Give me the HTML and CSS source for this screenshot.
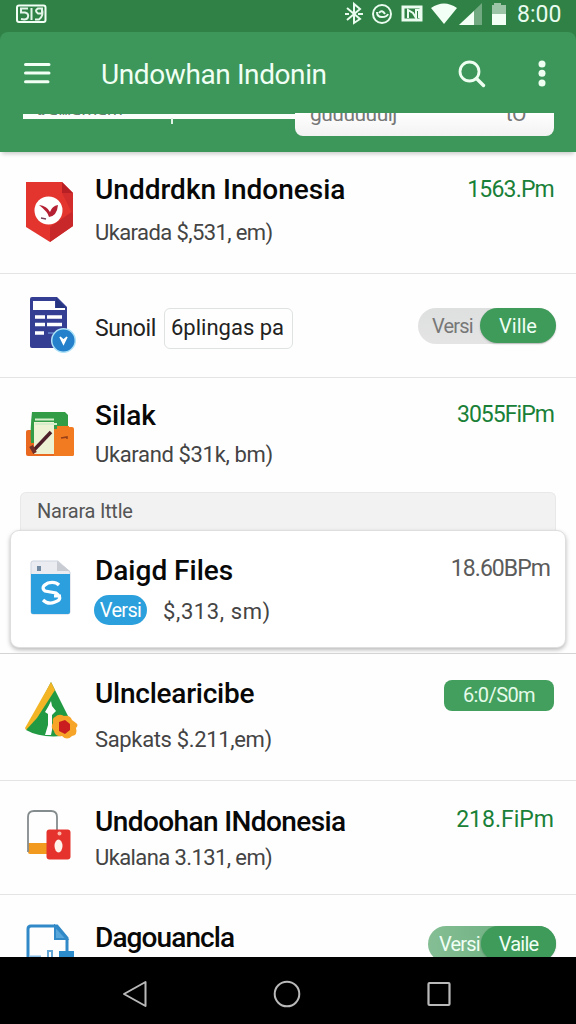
FILE: index.html
```
<!DOCTYPE html>
<html lang="id">
<head>
<meta charset="utf-8">
<title>Undowhan Indonin</title>
<link rel="stylesheet" href="styles.css">
</head>
<body>
<div class="screen">
  <div class="statusbar">
    <svg class="notif" width="32" height="20" viewBox="0 0 32 20"><rect x="2" y="1.500" width="28.500" height="16.500" rx="2" fill="#2f8145" stroke="#f2fff5" stroke-width="2"/><path d="M13 4.500H6v4h4q4 1 3 4.500t-7 2M16.500 4v12M28 4.500h-5q-4 2 0 5h4v-4q2 6-3 10h-4" fill="none" stroke="#e3f5e8" stroke-width="2"/></svg>
    <svg class="sysicons" width="172" height="28" viewBox="0 0 172 28">
      <g fill="none" stroke="#e9fcef" stroke-width="2">
        <path d="M3 8l13 11-6 4V4l6 5L3 20M1 14h4M14 14h5"/>
        <circle cx="38" cy="14" r="9"/><path d="M33 12q0 5 5 5t6-3M35 13q3-4 6 1"/>
        <path d="M59 7h18v13H59z" stroke-width="3"/><path d="M64 18v-8l5 3 3 5v-8h3v8"/>
      </g>
      <path d="M87 8q13-9 26 0l-13 16z" fill="#f2fff5"/>
      <path d="M115 25L138 3v22z" fill="#71a981"/><path d="M115 25l15-14v14z" fill="#f2fff5"/>
      <path d="M150 3h7v2h5v9h-14V5h2z" fill="#9bc5a6"/><path d="M148 14h14v11h-14z" fill="#f2fff5"/>
    </svg>
    <span class="clock">8:00</span>
  </div>
  <header class="appbar">
    <svg class="menu" width="28" height="23" viewBox="0 0 28 23"><path d="M2.500 2.500h23.500M2.500 11h23.500M2.500 19.700h22.500" stroke="#f2fff5" stroke-width="3" stroke-linecap="round"/></svg>
    <h1 class="apptitle">Undowhan Indonin</h1>
    <svg class="search" width="30" height="30" viewBox="0 0 30 30"><circle cx="11.500" cy="11.500" r="9.500" fill="none" stroke="#eefff2" stroke-width="2.800"/><path d="M18.500 18.500l7 7" stroke="#eefff2" stroke-width="3.400" stroke-linecap="round"/></svg>
    <svg class="more" width="8" height="28" viewBox="0 0 8 28" fill="#eefff2"><circle cx="4" cy="4" r="3.500"/><circle cx="4" cy="13.300" r="3.500"/><circle cx="4" cy="23" r="3.500"/></svg>
  </header>
  <div class="strip">
    <div class="line"><span class="ghost">Kawamam</span><i class="tick"></i></div>
    <div class="field"><span>guuuuuuij</span><span>tO</span></div>
  </div>
  <main class="list">
    <section class="row r1">
      <svg class="icon" width="52" height="64" viewBox="0 0 52 64"><path d="M1 1h36l11 11v33L25 61 1 46z" fill="#e3342e"/><path d="M48 30v15L25 61V46z" fill="#c9282a"/><path d="M37 1v11h11z" fill="#b71f25"/><path d="M37 12h11v22z" fill="#d32c2c"/><circle cx="23.500" cy="29.500" r="14" fill="#fff"/><path d="M14 24q8 1 11 7 2-6 8-7-1 11-9 12-1-5-10-12z" fill="#b52032"/><path d="M16 37l5 1" stroke="#744157" stroke-width="1.500"/></svg>
      <div class="body"><h2 class="title">Unddrdkn Indonesia</h2><p class="sub tight">Ukarada $,531, em)</p></div>
      <span class="price p1">1563.Pm</span>
    </section>
    <section class="row r2">
      <svg class="icon" width="52" height="60" viewBox="0 0 52 60"><path d="M6 1h25l10 10v41H6q-2 0-2-2V3q0-2 2-2z" fill="#343f94"/><path d="M7 5h22v7h10v2H7z" fill="#fff"/><path d="M30 2v10h10z" fill="#27347f"/><path d="M9 21h10M21 21h15M9 28.500h10M21 28.500h15M9 37h9" stroke="#fff" stroke-width="3.500"/><path d="M22 37h6" stroke="#5875be" stroke-width="2"/><circle cx="37.500" cy="44.500" r="11.800" fill="#2480ca" stroke="#aee2f7" stroke-width="1.500"/><path d="M34 41l3.500 7 3.500-7-3.500 3z" fill="#fff" stroke="#fff" stroke-width="1.500"/></svg>
      <div class="body inline"><span class="label">Sunoil</span><span class="input">6plingas pa</span></div>
      <div class="toggle"><span class="off">Versi</span><span class="on">Ville</span></div>
    </section>
    <section class="row r3">
      <svg class="icon" width="52" height="48" viewBox="0 0 52 48"><rect x="1" y="18" width="48" height="26" rx="2" fill="#e96920"/><path d="M7 0h33l3 3v28H6q-1-14 1-31z" fill="#329c47"/><path d="M9 7h20v35H9z" fill="#eef2d5"/><path d="M9 6h28v4H9z" fill="#329c47"/><path d="M10 7.500h19M10 12h22" stroke="#d6edcb" stroke-width="1.800"/><path d="M9 38l17-18" stroke="#4e1f2a" stroke-width="3.500"/><path d="M6 34l4 7" stroke="#71302a" stroke-width="4"/><path d="M29 17h3v-3h12v1h3q2 0 2 2v25q0 2-2 2H29z" fill="#f27a20"/><path d="M36 26l6-1v2" fill="none" stroke="#963f18" stroke-width="1.500"/></svg>
      <div class="body"><h2 class="title">Silak</h2><p class="sub snug">Ukarand $31k, bm)</p></div>
      <span class="price p3">3055FiPm</span>
    </section>
    <div class="section">Narara Ittle</div>
    <section class="row card">
      <svg class="icon" width="42" height="56" viewBox="0 0 42 56"><path d="M3 1h25l12 11v40q0 2-2 2H3q-2 0-2-2V3q0-2 2-2z" fill="#ebecf2" stroke="#cdd3dd"/><path d="M1 14h39v38q0 2-2 2H3q-2 0-2-2z" fill="#2c9fdf"/><path d="M27 1v10h13z" fill="#c9cbd2"/><path d="M7 6h4v5H7z" fill="#728ba2"/><path d="M29 25q-4-4-11-2-8 4-3 8l11 2q8 6-1 9-7 3-12-2M24 36h7" fill="none" stroke="#fff" stroke-width="3.200"/></svg>
      <div class="body"><h2 class="title">Daigd Files</h2><p class="sub"><span class="chip">Versi</span><span class="wide">$,313, sm)</span></p></div>
      <span class="price p3">18.60BPm</span>
    </section>
    <section class="row r5">
      <svg class="icon" width="54" height="62" viewBox="0 0 54 62"><path d="M26 1l19 38-8 16q-22 2-36-6z" fill="#219a43"/><path d="M26 1l4 8L12 37 1 49 0 47z" fill="#f3b526"/><path d="M26 20l1 5 4 5-4 4v15l-1 5h-6l3-10V33l-3-2 3-5z" fill="#fff"/><path d="M30 36q4-4 9-1 6-1 8 4l4 3q3 2 0 5 2 7-4 8-5 5-10 0-7 1-8-5-4-4-1-8-1-5 2-6z" fill="#f6a528"/><path d="M34 41l6-2 5 4v6l-5 4-6-3z" fill="#c91d20"/></svg>
      <div class="body"><h2 class="title t5">Ulnclearicibe</h2><p class="sub snug">Sapkats $.211,em)</p></div>
      <span class="badge">6:0/S0m</span>
    </section>
    <section class="row r6">
      <svg class="icon" width="46" height="52" viewBox="0 0 46 52"><path d="M2 34h19v11H4q-2 0-2-2z" fill="#f29a20"/><path d="M2 43V8q0-6 6-6h17q6 0 6 6v13" fill="none" stroke="#858c8e" stroke-width="1.800"/><rect x="20.500" y="20.500" width="24" height="30" rx="3" fill="#e5322c"/><circle cx="33.500" cy="24.500" r="2" fill="#ffb5a5"/><ellipse cx="32.500" cy="37" rx="4" ry="6.500" fill="#fff3ec"/></svg>
      <div class="body"><h2 class="title t6">Undoohan INdonesia</h2><p class="sub tight">Ukalana 3.131, em)</p></div>
      <span class="price">218.FiPm</span>
    </section>
    <section class="row r7">
      <svg class="icon" width="50" height="38" viewBox="0 0 50 38"><path d="M2 38V5q0-3 3-3h26l10 12v14" fill="none" stroke="#3189c7" stroke-width="3"/><path d="M29 2v13h12z" fill="#59a6da" stroke="#3189c7" stroke-width="2"/><path d="M33 27h15v11H33z" fill="#2c8ccc"/><path d="M4 33h11" stroke="#87bde5" stroke-width="3"/><path d="M22 38V27h4v11" fill="none" stroke="#64a7d7" stroke-width="2"/></svg>
      <div class="body"><h2 class="title t7">Dagouancla</h2></div>
      <div class="toggle green"><span class="off">Versi</span><span class="on">Vaile</span></div>
    </section>
  </main>
  <nav class="navbar">
    <svg width="26" height="28" viewBox="0 0 26 28"><path d="M2 14L23.500 2v24z" fill="none" stroke="#b9b9b9" stroke-width="2" stroke-linejoin="round"/></svg>
    <svg width="28" height="28" viewBox="0 0 28 28"><circle cx="14" cy="14" r="12.300" fill="none" stroke="#b9b9b9" stroke-width="2"/></svg>
    <svg width="26" height="28" viewBox="0 0 26 28"><rect x="2.500" y="3" width="21" height="22" rx="1" fill="none" stroke="#b9b9b9" stroke-width="2.200"/></svg>
  </nav>
</div>
</body>
</html>
```

FILE: styles.css
```
* { box-sizing: border-box; }
body { margin: 0; font-family: Roboto, "Noto Sans", sans-serif; color: #444; }
h1, h2, p { margin: 0; font-weight: 400; white-space: nowrap; }
svg { flex: none; }
.screen { width: 576px; height: 1024px; display: flex; flex-direction: column; overflow: hidden; background: #fefefe; }
.statusbar { height: 32px; flex: none; display: flex; align-items: flex-start; background: #2f8145; padding-left: 15px; box-shadow: 0 10px 0 #2f8145; }
.notif { margin-top: 4px; }
.sysicons { margin-left: 297px; }
.clock { margin-left: 1px; font-size: 23px; line-height: 29px; color: #e9fcef; white-space: nowrap; }
.appbar { height: 81px; flex: none; display: flex; align-items: flex-start; background: #3d965a; border-radius: 8px 8px 0 0; padding: 0 30px 0 23px; position: relative; }
.menu { margin-top: 30px; }
.apptitle { margin-left: 50px; margin-top: 25px; flex: 1; font-size: 28px; line-height: 35px; letter-spacing: -0.4px; color: #f0fff4; }
.search { margin-top: 28px; }
.more { margin: 28px 0 0 50px; }
.strip { height: 39px; flex: none; display: flex; background: #3d965a; padding: 0 22px 0 23px; position: relative; box-shadow: 0 4px 4px -2px #0003; z-index: 1; }
.line { width: 272px; height: 5px; margin-top: 1px; background: #fbfffc; position: relative; }
.ghost { display: block; height: 1px; padding-left: 14px; overflow: hidden; font-size: 18px; line-height: 0; color: #667e6e; }
.tick { position: absolute; left: 148px; top: 4px; width: 2px; height: 6px; background: #e0f4e6; }
.field { width: 259px; height: 23px; padding: 0 28px 0 15px; display: flex; justify-content: space-between; overflow: hidden; border-radius: 0 0 8px 8px; background: linear-gradient(#fff, #f1f2f1); color: #777; font-size: 21px; line-height: 2px; letter-spacing: -0.5px; }
.list { flex: 1; min-height: 0; display: flex; flex-direction: column; overflow: hidden; padding-top: 1px; }
.row { flex: none; display: flex; align-items: flex-start; border-bottom: 1px solid #e3e5e5; padding: 0 22px 0 25px; }
.body { width: 255px; flex: none; padding-top: 1px; }
.title { font-size: 28px; line-height: 32px; font-weight: 500; color: #080808; }
.t5 { letter-spacing: -0.25px; }
.t6 { letter-spacing: -0.6px; }
.t7 { letter-spacing: -0.9px; }
.sub { font-size: 22px; line-height: 28px; color: #444; display: flex; align-items: center; }
.tight { letter-spacing: -0.6px; }
.snug { letter-spacing: -0.35px; }
.wide { letter-spacing: 0.6px; }
.price { margin-left: auto; padding-top: 1px; font-size: 23px; line-height: 28px; color: #198038; white-space: nowrap; }
.p1 { letter-spacing: -0.8px; }
.p3 { letter-spacing: -0.95px; }
.r1 { height: 121px; }
.r1 .icon { margin: 28px 18px 0 0; }
.r1 .body { margin-top: 20px; }
.r1 .sub { margin-top: 13px; }
.r1 .price { margin-top: 22px; }
.r2 { height: 104px; }
.r2 .icon { margin: 22px 17px 0 1px; }
.inline { margin-top: 33px; display: flex; align-items: center; }
.label { width: 69px; font-size: 23px; letter-spacing: -0.4px; color: #222; }
.input { width: 129px; height: 41px; border: 1px solid #dfe2e2; border-radius: 6px; padding-left: 6px; font-size: 22px; line-height: 38px; color: #222; white-space: nowrap; }
.toggle { width: 138px; height: 36px; margin-left: auto; margin-right: -2px; margin-top: 34px; display: flex; font-size: 20px; line-height: 36px; border-radius: 18px; background: linear-gradient(#dedfdf, #e4e4e4); white-space: nowrap; }
.off { width: 62px; padding-left: 14px; letter-spacing: -0.8px; color: #777; }
.on { width: 76px; height: 35px; border-radius: 18px; background: #3e9b5a; color: #f0fff4; text-align: center; box-shadow: 0 1px 2px #0003; }
.r3 { height: 114px; border: 0; }
.r3 .icon { margin: 34px 18px 0 0; }
.r3 .body { margin-top: 21px; }
.r3 .sub { margin-top: 9px; }
.r3 .price { margin-top: 22px; }
.section { flex: none; height: 38px; margin: 0 20px; padding-left: 16px; border-radius: 6px 6px 0 0; border: 1px solid #e8e8e8; border-bottom: 0; background: #f2f2f2; font-size: 20px; line-height: 37px; letter-spacing: -0.25px; color: #555; white-space: nowrap; }
.card { height: 118px; margin: 0 10px; padding: 0 15px 0 19px; border: 1px solid #dedede; border-radius: 9px; background: #fff; box-shadow: 0 2px 4px #0004; }
.card .icon { margin: 29px 23px 0 0; }
.card .body { margin-top: 23px; }
.card .sub { margin-top: 11px; }
.card .price { margin-top: 23px; color: #5b5b5b; }
.chip { width: 53px; height: 30px; margin: -4px 16px 0 -1px; border-radius: 15px; background: #2ba0dc; color: #fff; font-size: 20px; line-height: 30px; letter-spacing: -0.7px; text-align: center; }
.r5 { height: 128px; margin-top: 5px; border-top: 1px solid #d4d4d4; }
.r5 .icon { margin: 27px 16px 0 0; }
.r5 .body { margin-top: 23px; }
.r5 .sub { margin-top: 16px; }
.badge { width: 110px; height: 31px; margin: 26px 0 0 auto; border-radius: 8px; background: #439f5d; color: #e5fae9; font-size: 20px; line-height: 31px; letter-spacing: -0.6px; text-align: center; }
.r6 { height: 114px; }
.r6 .icon { margin: 28px 23px 0 1px; }
.r6 .body { margin-top: 24px; }
.r6 .sub { margin-top: 6px; }
.r6 .price { margin-top: 24px; }
.r7 { border: 0; }
.r7 .icon { margin: 29px 19px 0 1px; }
.r7 .body { margin-top: 26px; }
.green { width: 128px; background: linear-gradient(90deg, #85be94, #61a976); margin-top: 31px; }
.green .off { width: 53px; padding-left: 11px; color: #f0fff4; line-height: 37px; }
.green .on { width: 75px; letter-spacing: -0.8px; }
.navbar { height: 67px; flex: none; display: flex; justify-content: space-between; align-items: center; padding: 6px 124px 0 122px; background: #000; }
```
